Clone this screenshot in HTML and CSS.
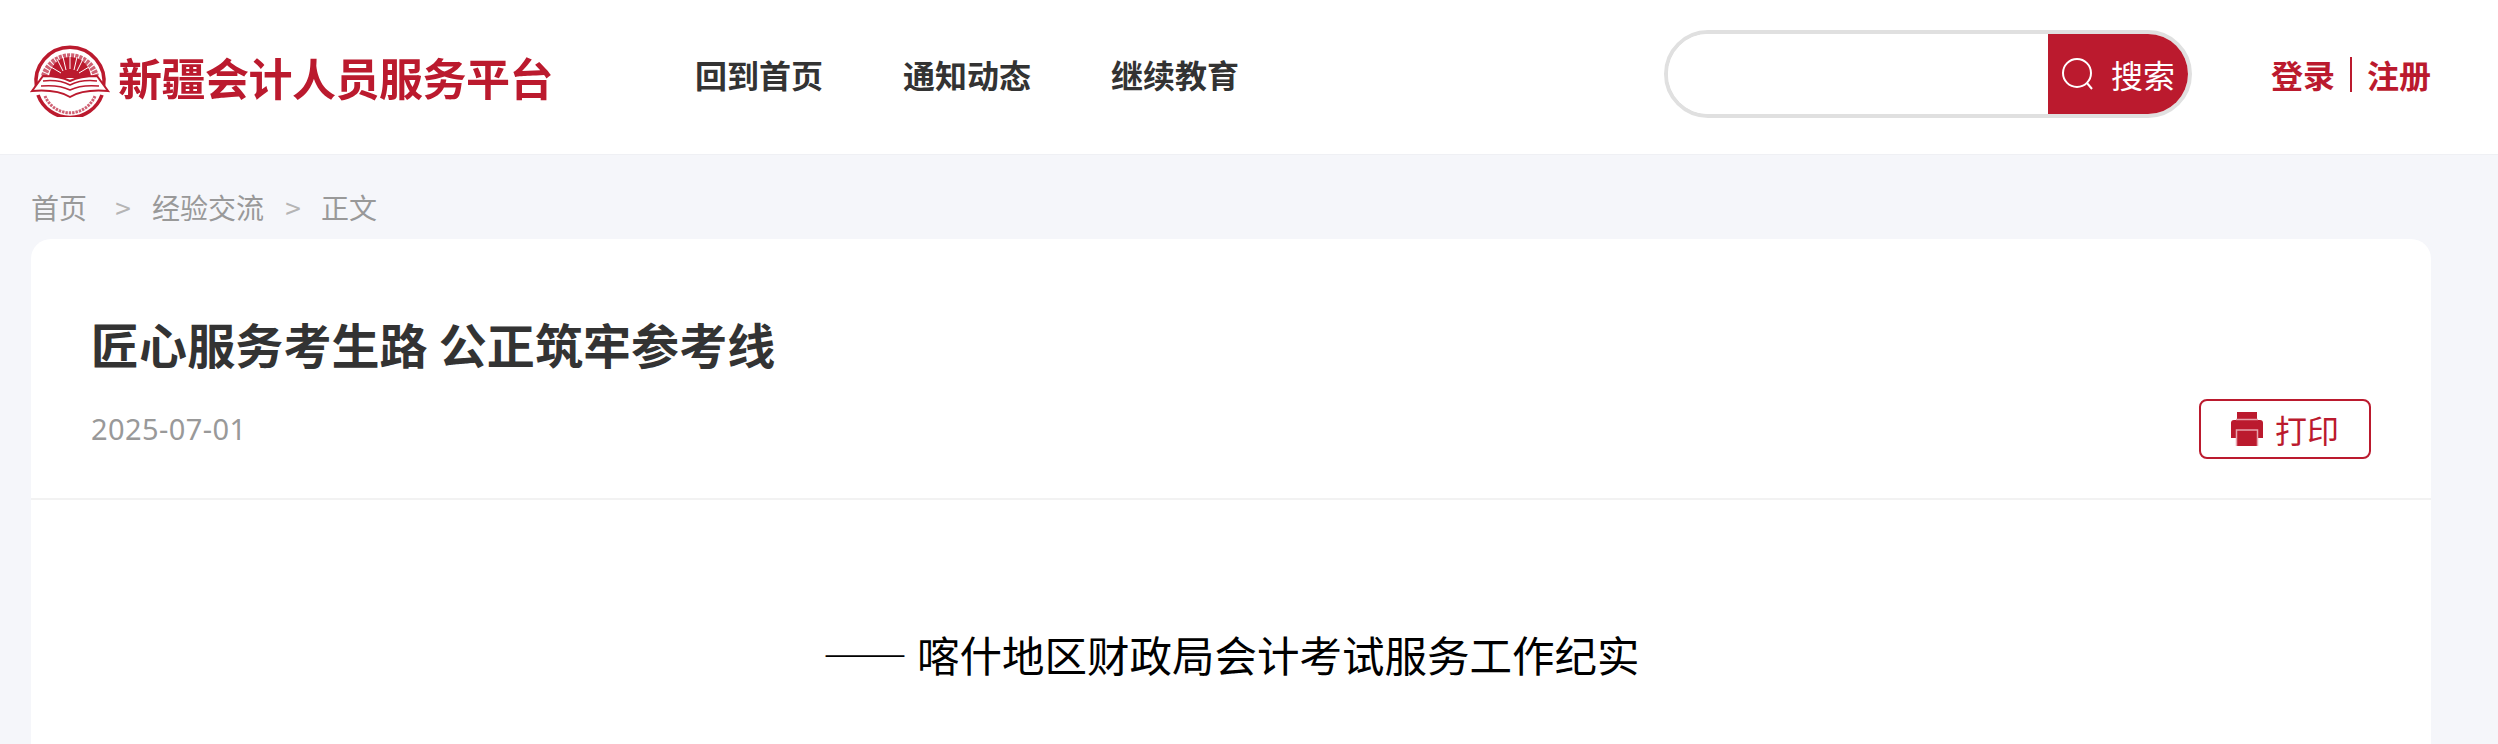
FILE: index.html
```html
<!DOCTYPE html>
<html lang="zh-CN">
<head>
  <meta charset="UTF-8">
  <title>匠心服务考生路 公正筑牢参考线</title>
  <link rel="stylesheet" href="styles.css">
</head>
<body>
  <header class="site-header">
    <div class="container header-inner">
      <a class="logo" href="#">
        <svg class="logo-mark" width="80" height="74" viewBox="0 0 80 74">
          <path d="M6.500 44A34 34 0 1 1 73.500 44" fill="none" stroke="#bb1a2e" stroke-width="3.6"/>
          <path d="M14 33A27 27 0 0 1 66 33" fill="none" stroke="#cf6173" stroke-width="6" stroke-dasharray="3 1"/>
          <path d="M19 35a21 21 0 0 1 42 0z" fill="#bb1a2e"/>
          <path d="M33 28L27 16M36 27L33 14M40 26V13M44 27L47 14M47 28L53 16M31 30L21 24M49 30L59 24" stroke="#fff" stroke-width="1"/>
          <path d="M2 48L13 33C22 33 32 34 40 38C48 34 58 33 67 33L78 48C66 47 50 48 40 54C30 48 14 47 2 48z" fill="#fff" stroke="#bb1a2e" stroke-width="2"/>
          <path d="M13 38C22 37 32 38 40 42C48 38 58 37 67 38M11 43C22 42 32 43 40 47C48 43 58 42 69 43" fill="none" stroke="#bb1a2e" stroke-width="1.5"/>
          <path d="M8 52A34 34 0 0 0 72 52" fill="none" stroke="#bb1a2e" stroke-width="3.6"/>
          <path d="M15 53A27 27 0 0 0 65 53" fill="none" stroke="#cf6173" stroke-width="3" stroke-dasharray="2.4 1"/>
        </svg>
        <span class="logo-text">新疆会计人员服务平台</span>
      </a>
      <nav class="main-nav">
        <a href="#">回到首页</a>
        <a href="#">通知动态</a>
        <a href="#">继续教育</a>
      </nav>
      <form class="search-box">
        <input class="search-input" type="text">
        <button class="search-btn" type="button">
          <svg width="34" height="34" viewBox="0 0 34 34" fill="none" stroke="#fff" stroke-width="2">
            <circle cx="16" cy="16" r="14"/>
            <path d="M26 26L31 32"/>
          </svg>
          <span>搜索</span>
        </button>
      </form>
      <div class="user-links">
        <a href="#">登录</a>
        <i class="divider"></i>
        <a href="#">注册</a>
      </div>
    </div>
  </header>

  <main class="container">
    <div class="breadcrumb">
      <a href="#">首页</a>
      <span class="sep first">&gt;</span>
      <a href="#">经验交流</a>
      <span class="sep">&gt;</span>
      <a href="#">正文</a>
    </div>

    <article class="article-card">
      <div class="article-head">
        <h1>匠心服务考生路 公正筑牢参考线</h1>
        <div class="article-meta">
          <span class="article-date">2025-07-01</span>
          <button class="print-btn" type="button">
            <svg class="print-icon" width="32" height="34" viewBox="0 0 32 34">
              <path d="M6 0h20v7H6z" fill="#bb1a2e"/>
              <path d="M3 8h26a3 3 0 0 1 3 3v15H0V11a3 3 0 0 1 3-3z" fill="#bb1a2e"/>
              <path d="M6 18h20v16H6z" fill="#bb1a2e"/>
              <path d="M5 7.500h22" fill="none" stroke="#e8a3ad" stroke-width="1.500"/>
              <path d="M5.500 26v-8h21v8M5.500 26v8M26.500 26v8" fill="none" stroke="#e8a3ad" stroke-width="1.500"/>
            </svg>
            <span>打印</span>
          </button>
        </div>
      </div>
      <div class="article-body">
        <p class="subtitle">—— 喀什地区财政局会计考试服务工作纪实</p>
      </div>
    </article>
  </main>
</body>
</html>
```

FILE: styles.css
```css
:root {
  --primary-color: #bb1a2e;
  --background-color: #f5f6fa;
  --card-background: #ffffff;
  --text-color: #333333;
  --muted-color: #999999;
}

* {
  margin: 0;
  padding: 0;
  box-sizing: border-box;
}

body {
  font-family: "Noto Sans CJK SC", "Noto Sans", sans-serif;
  background-color: var(--background-color);
  color: var(--text-color);
}

a {
  color: inherit;
  text-decoration: none;
}

.container {
  width: 2400px;
  margin-left: 31px;
}

.site-header {
  height: 155px;
  background-color: var(--card-background);
  border-bottom: 1px solid #eff0f4;
}

.header-inner {
  display: flex;
  align-items: center;
  height: 100%;
  padding-bottom: 6px;
}

.logo {
  display: flex;
  align-items: center;
  width: 664px;
  margin-top: 12px;
  color: var(--primary-color);
}

.logo-mark {
  flex: none;
  margin-left: -1px;
  filter: blur(0.4px);
}

.logo-text {
  margin-left: 8px;
  margin-bottom: 6px;
  font-size: 44px;
  line-height: 50px;
  font-weight: 700;
  letter-spacing: -0.5px;
  white-space: nowrap;
  filter: blur(0.4px);
}

.main-nav {
  display: flex;
  gap: 80px;
  font-size: 32px;
  line-height: 44px;
  font-weight: 700;
  margin-top: -1px;
}

.search-box {
  display: flex;
  width: 528px;
  height: 88px;
  margin-left: auto;
  margin-right: 79px;
  border: 4px solid #e0e0e0;
  border-radius: 44px;
  overflow: hidden;
  background-color: #fff;
}

.search-input {
  flex: 1;
  min-width: 0;
  border: none;
  outline: none;
}

.search-btn {
  display: flex;
  align-items: center;
  gap: 16px;
  width: 140px;
  padding-left: 13px;
  background-color: var(--primary-color);
  color: #fff;
  border: none;
  font-family: inherit;
  font-size: 32px;
  line-height: 44px;
}

.user-links {
  display: flex;
  align-items: center;
  color: var(--primary-color);
  font-size: 32px;
  line-height: 44px;
  font-weight: 700;
}

.divider {
  width: 2px;
  height: 35px;
  margin: 0 15px 0 15px;
  background-color: var(--primary-color);
}

.breadcrumb {
  display: flex;
  align-items: center;
  height: 84px;
  padding-top: 19px;
  font-size: 28px;
  line-height: 38px;
  color: var(--muted-color);
}

.sep {
  width: 16px;
  margin: 0 20px 0 21px;
  text-align: center;
  color: #b5b5b5;
}

.sep.first {
  margin: 0 21px 0 28px;
}

.article-card {
  background-color: var(--card-background);
  border-radius: 20px 20px 0 0;
  height: 505px;
}

.article-head {
  height: 261px;
  padding: 74px 60px 0 60px;
  border-bottom: 2px solid #f2f2f2;
}

.article-head h1 {
  font-size: 48px;
  line-height: 60px;
  font-weight: 700;
  letter-spacing: 0.1px;
}

.article-meta {
  display: flex;
  justify-content: space-between;
  align-items: center;
  margin-top: 26px;
}

.article-date {
  font-family: "Noto Sans", sans-serif;
  font-size: 29px;
  line-height: 38px;
  letter-spacing: 0.4px;
  color: var(--muted-color);
}

.print-btn {
  display: flex;
  align-items: center;
  justify-content: center;
  gap: 12px;
  width: 172px;
  height: 60px;
  background-color: #fff;
  color: var(--primary-color);
  border: 2px solid var(--primary-color);
  border-radius: 8px;
  font-family: inherit;
  font-size: 32px;
  line-height: 40px;
}

.print-icon {
  filter: blur(0.4px);
}

.article-body {
  padding-top: 124px;
}

.subtitle {
  text-align: center;
  font-size: 42.5px;
  line-height: 60px;
  color: #000;
}
```
